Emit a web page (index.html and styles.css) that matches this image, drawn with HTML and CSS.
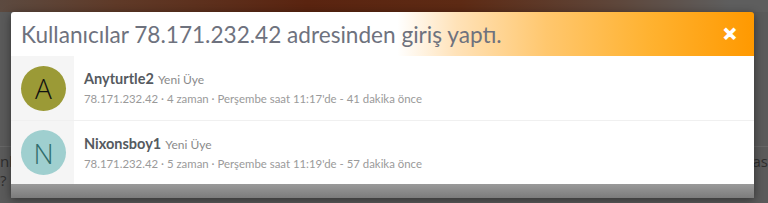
FILE: index.html
```html
<!DOCTYPE html>
<html lang="tr">
<head>
<meta charset="utf-8">
<title>Giriş</title>
<link rel="stylesheet" href="styles.css">
</head>
<body>
<div class="page">
  <div class="page-top"></div>
  <div class="page-body">
    <div class="page-row page-row-first"></div>
    <div class="page-row page-row-second">
      <span class="frag">nla</span>
      <span class="frag">as</span>
    </div>
    <div class="page-row page-row-third">
      <span class="frag">?</span>
    </div>
  </div>
</div>

<div class="modal">
  <div class="modal-head">
    <h1 class="modal-title">Kullanıcılar 78.171.232.42 adresinden giriş yaptı.</h1>
    <span class="modal-close">&#x2715;</span>
  </div>
  <ul class="user-list">
    <li class="user">
      <div class="user-side"><span class="avatar avatar-a">A</span></div>
      <div class="user-info">
        <div class="user-line"><span class="user-name">Anyturtle2</span> <span class="user-role">Yeni Üye</span></div>
        <div class="user-meta">78.171.232.42 · 4 zaman · Perşembe saat 11:17'de - 41 dakika önce</div>
      </div>
    </li>
    <li class="user">
      <div class="user-side"><span class="avatar avatar-n">N</span></div>
      <div class="user-info">
        <div class="user-line"><span class="user-name">Nixonsboy1</span> <span class="user-role">Yeni Üye</span></div>
        <div class="user-meta">78.171.232.42 · 5 zaman · Perşembe saat 11:19'de - 57 dakika önce</div>
      </div>
    </li>
  </ul>
  <div class="modal-foot"></div>
</div>
</body>
</html>
```
FILE: styles.css
```css
html, body {
  margin: 0;
  padding: 0;
}
body {
  width: 768px;
  height: 203px;
  overflow: hidden;
  background: #575757;
  font-family: "Lato", "Open Sans", sans-serif;
  position: relative;
}
.page {
  display: flex;
  flex-direction: column;
  height: 203px;
}
.page-top {
  height: 12px;
  background: linear-gradient(to right, #5c4a40 0%, #5f3a28 15%, #5a2410 40%, #5d2a14 60%, #5e463a 80%, #5e5e5e 95%);
}
.page-body {
  flex: 1;
  display: flex;
  flex-direction: column;
  background: #5a5a5a;
}
.page-row-first {
  height: 134px;
  border-bottom: 1px solid #666;
}
.page-row-second {
  height: 28px;
  display: flex;
  justify-content: space-between;
  align-items: center;
}
.page-row-third {
  flex: 1;
}
.frag {
  font-family: "Open Sans", sans-serif;
  font-size: 15px;
  color: #2e2e2e;
  line-height: 18px;
}
.page-row-third .frag {
  display: block;
  margin-top: -4px;
}

.modal {
  position: absolute;
  top: 12px;
  left: 11px;
  width: 743px;
  border-radius: 3px 3px 0 0;
  box-shadow: 0 2px 10px rgba(0, 0, 0, 0.45);
}
.modal-head {
  height: 44px;
  display: flex;
  align-items: center;
  justify-content: space-between;
  padding: 0 17px 0 10px;
  border-radius: 3px 3px 0 0;
  background: linear-gradient(to right, #ffffff 52%, #ffe2b8 60%, #ffc76e 72%, #ffb230 86%, #ff9900 100%);
}
.modal-title {
  margin: 0;
  font-size: 22.6px;
  font-weight: 400;
  color: #6e727e;
}
.modal-close {
  color: #fff;
  font-size: 17px;
  font-weight: 700;
  line-height: 1;
  font-family: "DejaVu Sans", sans-serif;
  -webkit-text-stroke: 1.8px #fff;
}
.user-list {
  list-style: none;
  margin: 0;
  padding: 0;
  background: #fff;
}
.user {
  display: flex;
  height: 63px;
  border-top: 1px solid #f0f0f0;
}
.user:first-child {
  border-top: none;
  height: 64px;
}
.user-side {
  width: 63px;
  background: #f5f5f5;
  display: flex;
  align-items: center;
  justify-content: center;
}
.avatar {
  width: 45px;
  height: 45px;
  border-radius: 50%;
  display: flex;
  align-items: center;
  justify-content: center;
  font-family: "Open Sans", sans-serif;
  font-size: 28px;
  font-weight: 300;
  margin-left: 2px;
}
.avatar-a {
  background: #9b9a36;
  color: #111;
}
.avatar-n {
  background: #9fcfcf;
  color: #2f6d6b;
}
.user-info {
  display: flex;
  flex-direction: column;
  justify-content: center;
  padding-left: 10px;
  gap: 2px;
}
.user-line {
  line-height: 18px;
}
.user-name {
  font-size: 14.5px;
  font-weight: 700;
  color: #555a60;
}
.user-role {
  font-size: 12px;
  color: #8a8a8a;
}
.user-meta {
  font-size: 11.4px;
  color: #9a9a9a;
  line-height: 16px;
}
.modal-foot {
  height: 14px;
  background: linear-gradient(to bottom, #9a9a9a, #7c7c7c);
}
```
